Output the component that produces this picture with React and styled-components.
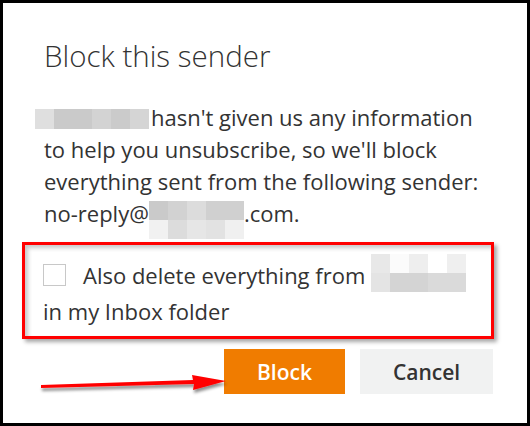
import React from "react";
import styled, { createGlobalStyle } from "styled-components";

const GlobalStyle = createGlobalStyle`
  html, body { margin: 0; padding: 0; background: #fff; }
  * { box-sizing: border-box; }
`;

const Frame = styled.div`
  position: relative;
  width: 530px;
  height: 426px;
  border: 3px solid #000;
  background: #fff;
  padding: 0 34px 0 41px;
  font-family: "Open Sans", "Noto Sans", sans-serif;
  color: #333;
  overflow: hidden;
`;

const Title = styled.h1`
  margin: 31px 0 0;
  font-size: 29.5px;
  font-weight: 300;
  line-height: 44px;
  color: #333;
`;

const Body = styled.div`
  margin: 23px 0 0;
  font-size: 22px;
  line-height: 32px;
`;

const Line = styled.div`
  white-space: nowrap;
`;

const Redact = styled.span`
  display: inline-block;
  vertical-align: ${(p) => p.$valign || "baseline"};
  width: ${(p) => p.$w}px;
  height: ${(p) => p.$h || 19}px;
  margin: ${(p) => p.$m || "0"};
  align-self: flex-start;
`;

const RedRow = styled.span`
  display: flex;
`;

const Cell = styled.span`
  display: block;
  width: ${(p) => p.$w || 19}px;
  height: ${(p) => p.$h || 19}px;
  background: ${(p) => p.$c};
`;

const Highlight = styled.div`
  margin: 13px 0 0 -22px;
  width: 472px;
  height: 97px;
  border: 3px solid #ff0000;
  padding: 12px 0 0 18px;
  box-shadow: 3px 3px 4px rgba(0, 0, 0, 0.35), inset 3px 3px 4px rgba(0, 0, 0, 0.22);
  font-size: 22px;
  line-height: 36px;
`;

const CheckLine = styled.div`
  display: flex;
  align-items: center;
  height: 36px;
  white-space: nowrap;
`;

const Box = styled.span`
  display: block;
  width: 23px;
  height: 22px;
  border: 1px solid #c8c8c8;
  background: #fff;
  margin-right: 17px;
`;

const Actions = styled.div`
  display: flex;
  justify-content: flex-end;
  gap: 15px;
  margin-top: 10px;
`;

const Button = styled.button`
  width: ${(p) => p.$w}px;
  height: 45px;
  border: none;
  background: ${(p) => (p.$primary ? "#f07c00" : "#f1f2f2")};
  color: ${(p) => (p.$primary ? "#fff" : "#333")};
  font-family: "Open Sans", "Noto Sans", sans-serif;
  font-size: 21px;
  font-weight: 600;
  padding: 0;
`;

const Arrow = styled.svg`
  position: absolute;
  left: 33px;
  top: 364px;
`;

export default function App() {
  return (
    <>
      <GlobalStyle />
      <Frame>
        <Title>Block this sender</Title>
        <Body>
          <Line>
            <Redact $w={114} $h={20} $valign="-3px" $m="0 2px 0 -9px">
              <RedRow>
                <Cell $c="#dfdfdf" $h={20} />
                <Cell $c="#cacaca" $w={38} $h={20} />
                <Cell $c="#d3d3d3" $h={20} />
                <Cell $c="#cbcbcb" $h={20} />
                <Cell $c="#d5d5d5" $h={20} />
              </RedRow>
            </Redact>
            hasn't given us any information
          </Line>
          <Line>to help you unsubscribe, so we'll block</Line>
          <Line>everything sent from the following sender:</Line>
          <Line>
            no-reply@
            <Redact $w={95} $valign="top" $m="4px 0 0 0">
              <RedRow>
                <Cell $c="#cacaca" />
                <Cell $c="#d2d2d2" />
                <Cell $c="#dcdcdc" />
                <Cell $c="#d0d0d0" $w={38} />
              </RedRow>
              <RedRow>
                <Cell $c="#f1f1f1" />
                <Cell $c="#dcdcdc" />
                <Cell $c="#e6e6e6" />
                <Cell $c="#e2e2e2" />
                <Cell $c="#f0f0f0" />
              </RedRow>
            </Redact>
            .com.
          </Line>
        </Body>
        <Highlight>
          <CheckLine>
            <Box />
            <span>Also delete everything from&nbsp;</span>
            <Redact $w={95} $h={38} $m="-3px 0 0 0">
              <RedRow>
                <Cell $c="#e8e8e8" />
                <Cell $c="#fbfbfb" />
                <Cell $c="#eeeeee" />
                <Cell $c="#ffffff" />
                <Cell $c="#efefef" />
              </RedRow>
              <RedRow>
                <Cell $c="#e4e4e4" />
                <Cell $c="#d4d4d4" $w={38} />
                <Cell $c="#dadada" />
                <Cell $c="#dadada" />
              </RedRow>
            </Redact>
          </CheckLine>
          <Line>in my Inbox folder</Line>
        </Highlight>
        <Actions>
          <Button $primary $w={121}>Block</Button>
          <Button $w={133}>Cancel</Button>
        </Actions>
        <Arrow width="200" height="34" viewBox="0 0 200 34">
          <defs>
            <filter id="sh" x="-10%" y="-50%" width="120%" height="200%">
              <feDropShadow dx="1" dy="3" stdDeviation="1.5" floodColor="#000" floodOpacity="0.45" />
            </filter>
          </defs>
          <path
            d="M5 18 L5 21 L158 17 L157 23 L190 14 L156 8 L157 13 Z"
            fill="#ff0000"
            filter="url(#sh)"
          />
        </Arrow>
      </Frame>
    </>
  );
}
